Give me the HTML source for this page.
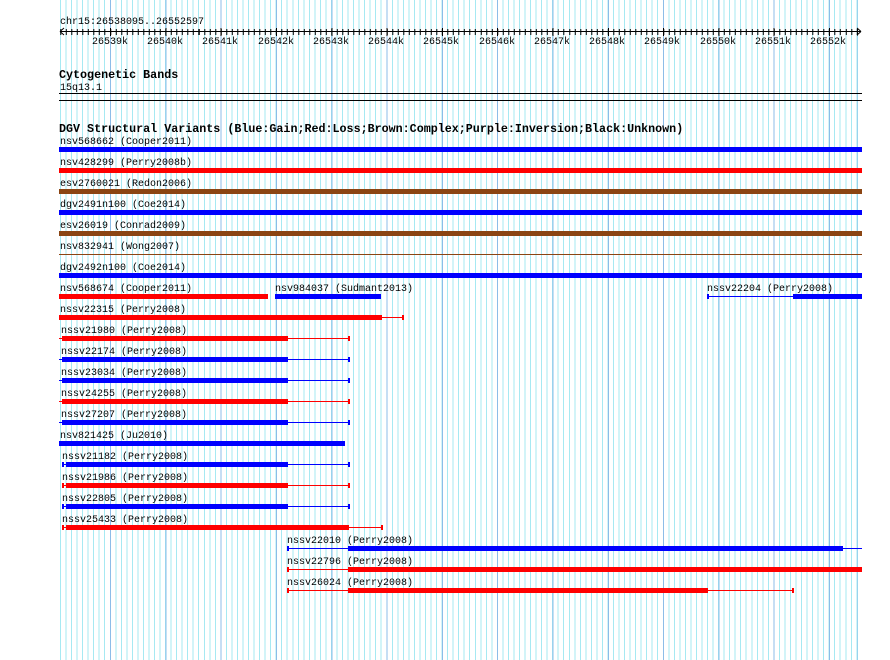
<!DOCTYPE html>
<html><head><meta charset="utf-8"><style>
body{margin:0;background:#fff;}
#w{position:relative;width:890px;height:660px;overflow:hidden;background:#fff;}
#g1{position:absolute;left:60px;top:0;width:798px;height:660px;
background:repeating-linear-gradient(90deg,#a6e9f2 0,#a6e9f2 1px,transparent 1px,transparent 5.53px);}
#g2{position:absolute;left:0;top:0;width:858px;height:660px;
background:repeating-linear-gradient(90deg,#8cbde8 0,#8cbde8 1px,transparent 1px,transparent 55.3px);background-position:-0.5px 0;
-webkit-mask:linear-gradient(90deg,transparent 60px,#000 60px);}
svg{position:absolute;left:0;top:0;}
text{font-family:"Liberation Mono",monospace;font-size:10px;fill:#000;}
.b{font-weight:bold;font-size:11.7px;}
</style></head><body><div id="w">
<div id="g1"></div><div id="g2"></div>
<div style="position:absolute;left:60px;top:29px;width:800px;height:6px;background:repeating-linear-gradient(90deg,#000 0,#000 1px,transparent 1px,transparent 5.53px);background-position:0.3px 0;"></div>
<div style="position:absolute;left:0;top:28px;width:858px;height:8px;background:repeating-linear-gradient(90deg,#000 0,#000 1px,transparent 1px,transparent 55.3px);background-position:-0.5px 0;-webkit-mask:linear-gradient(90deg,transparent 60px,#000 60px);"></div>
<svg width="890" height="660" shape-rendering="crispEdges">
<text x="60" y="24">chr15:26538095..26552597</text>
<line x1="60" y1="31.5" x2="861" y2="31.5" stroke="#000"/>
<path d="M60 31.5 L64 28 M60 31.5 L64 35 M861 31.5 L857 28 M861 31.5 L857 35" stroke="#000" fill="none" shape-rendering="auto"/>
<g text-anchor="middle">
<text x="110" y="44">26539k</text><text x="165" y="44">26540k</text><text x="220" y="44">26541k</text><text x="276" y="44">26542k</text><text x="331" y="44">26543k</text><text x="386" y="44">26544k</text><text x="441" y="44">26545k</text><text x="497" y="44">26546k</text><text x="552" y="44">26547k</text><text x="607" y="44">26548k</text><text x="662" y="44">26549k</text><text x="718" y="44">26550k</text><text x="773" y="44">26551k</text><text x="828" y="44">26552k</text>
</g>
<text class="b" x="59" y="78">Cytogenetic Bands</text>
<text x="60" y="90">15q13.1</text>
<rect x="59" y="93" width="803" height="1" fill="#000"/>
<rect x="59" y="100" width="803" height="1" fill="#000"/>
<text class="b" x="59" y="132">DGV Structural Variants (Blue:Gain;Red:Loss;Brown:Complex;Purple:Inversion;Black:Unknown)</text>

<text x="60" y="144">nsv568662 (Cooper2011)</text><rect x="59" y="147" width="803" height="5" fill="#00f"/>
<text x="60" y="165">nsv428299 (Perry2008b)</text><rect x="59" y="168" width="803" height="5" fill="#f00"/>
<text x="60" y="186">esv2760021 (Redon2006)</text><rect x="59" y="189" width="803" height="5" fill="#8b4513"/>
<text x="60" y="207">dgv2491n100 (Coe2014)</text><rect x="59" y="210" width="803" height="5" fill="#00f"/>
<text x="60" y="228">esv26019 (Conrad2009)</text><rect x="59" y="231" width="803" height="5" fill="#8b4513"/>
<text x="60" y="249">nsv832941 (Wong2007)</text><rect x="59" y="254" width="803" height="1" fill="#8b4513"/>
<text x="60" y="270">dgv2492n100 (Coe2014)</text><rect x="59" y="273" width="803" height="5" fill="#00f"/>

<text x="60" y="291">nsv568674 (Cooper2011)</text><rect x="59" y="294" width="209" height="5" fill="#f00"/>
<text x="275" y="291">nsv984037 (Sudmant2013)</text><rect x="275" y="294" width="106" height="5" fill="#00f"/>
<text x="707" y="291">nssv22204 (Perry2008)</text><rect x="707" y="294" width="2" height="5" fill="#00f"/><rect x="707" y="296" width="86" height="1" fill="#00f"/><rect x="793" y="294" width="69" height="5" fill="#00f"/>

<text x="60" y="312">nssv22315 (Perry2008)</text><rect x="59" y="315" width="323" height="5" fill="#f00"/><rect x="382" y="317" width="21" height="1" fill="#f00"/><rect x="402" y="315" width="2" height="5" fill="#f00"/>

<text x="61" y="333">nssv21980 (Perry2008)</text>
<text x="61" y="354">nssv22174 (Perry2008)</text>
<text x="61" y="375">nssv23034 (Perry2008)</text>
<text x="61" y="396">nssv24255 (Perry2008)</text>
<text x="61" y="417">nssv27207 (Perry2008)</text>
<g>
<rect x="59" y="338" width="290" height="1" fill="#f00"/><rect x="62" y="336" width="226" height="5" fill="#f00"/><rect x="348" y="336" width="2" height="5" fill="#f00"/>
<rect x="59" y="359" width="290" height="1" fill="#00f"/><rect x="62" y="357" width="226" height="5" fill="#00f"/><rect x="348" y="357" width="2" height="5" fill="#00f"/>
<rect x="59" y="380" width="290" height="1" fill="#00f"/><rect x="62" y="378" width="226" height="5" fill="#00f"/><rect x="348" y="378" width="2" height="5" fill="#00f"/>
<rect x="59" y="401" width="290" height="1" fill="#f00"/><rect x="62" y="399" width="226" height="5" fill="#f00"/><rect x="348" y="399" width="2" height="5" fill="#f00"/>
<rect x="59" y="422" width="290" height="1" fill="#00f"/><rect x="62" y="420" width="226" height="5" fill="#00f"/><rect x="348" y="420" width="2" height="5" fill="#00f"/>
</g>
<text x="60" y="438">nsv821425 (Ju2010)</text><rect x="59" y="441" width="286" height="5" fill="#00f"/>

<text x="62" y="459">nssv21182 (Perry2008)</text>
<rect x="63" y="464" width="286" height="1" fill="#00f"/><rect x="62" y="462" width="2" height="5" fill="#00f"/><rect x="66" y="462" width="222" height="5" fill="#00f"/><rect x="348" y="462" width="2" height="5" fill="#00f"/>
<text x="62" y="480">nssv21986 (Perry2008)</text>
<rect x="63" y="485" width="286" height="1" fill="#f00"/><rect x="62" y="483" width="2" height="5" fill="#f00"/><rect x="66" y="483" width="222" height="5" fill="#f00"/><rect x="348" y="483" width="2" height="5" fill="#f00"/>
<text x="62" y="501">nssv22805 (Perry2008)</text>
<rect x="63" y="506" width="286" height="1" fill="#00f"/><rect x="62" y="504" width="2" height="5" fill="#00f"/><rect x="66" y="504" width="222" height="5" fill="#00f"/><rect x="348" y="504" width="2" height="5" fill="#00f"/>
<text x="62" y="522">nssv25433 (Perry2008)</text>
<rect x="63" y="527" width="319" height="1" fill="#f00"/><rect x="62" y="525" width="2" height="5" fill="#f00"/><rect x="66" y="525" width="283" height="5" fill="#f00"/><rect x="381" y="525" width="2" height="5" fill="#f00"/>

<text x="287" y="543">nssv22010 (Perry2008)</text>
<rect x="288" y="548" width="574" height="1" fill="#00f"/><rect x="287" y="546" width="2" height="5" fill="#00f"/><rect x="348" y="546" width="495" height="5" fill="#00f"/>
<text x="287" y="564">nssv22796 (Perry2008)</text>
<rect x="288" y="569" width="60" height="1" fill="#f00"/><rect x="287" y="567" width="2" height="5" fill="#f00"/><rect x="348" y="567" width="514" height="5" fill="#f00"/>
<text x="287" y="585">nssv26024 (Perry2008)</text>
<rect x="288" y="590" width="505" height="1" fill="#f00"/><rect x="287" y="588" width="2" height="5" fill="#f00"/><rect x="348" y="588" width="360" height="5" fill="#f00"/><rect x="792" y="588" width="2" height="5" fill="#f00"/>
</svg>
</div></body></html>
